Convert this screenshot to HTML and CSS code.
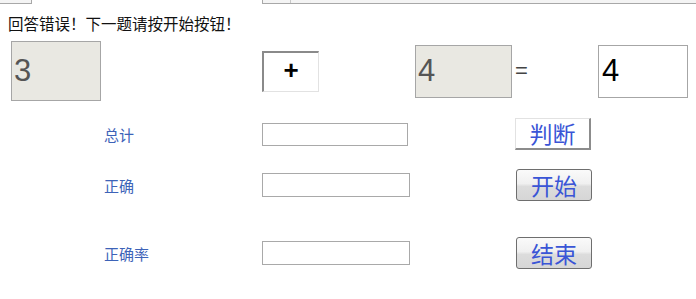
FILE: index.html
```html
<!DOCTYPE html>
<html lang="zh">
<head>
<meta charset="utf-8">
<title>四则运算</title>
<link rel="stylesheet" href="styles.css">
</head>
<body>
<div class="top-strip">
  <div class="stub stub-left"></div>
  <div class="stub stub-right"><div class="stub-cell"></div></div>
</div>
<div class="message">回答错误！下一题请按开始按钮！</div>
<div class="row equation">
  <div class="num readonly n1">3</div>
  <div class="op">+</div>
  <div class="num readonly n2">4</div>
  <div class="eq">=</div>
  <div class="num answer">4</div>
</div>
<div class="row stat r-total">
  <span class="label">总计</span>
  <span class="field f-total"></span>
  <span class="btn btn-flat">判断</span>
</div>
<div class="row stat r-right">
  <span class="label">正确</span>
  <span class="field"></span>
  <span class="btn btn-raised">开始</span>
</div>
<div class="row stat r-rate">
  <span class="label">正确率</span>
  <span class="field"></span>
  <span class="btn btn-raised">结束</span>
</div>
</body>
</html>
```
FILE: styles.css
```css
html, body {
  margin: 0;
  padding: 0;
  background: #ffffff;
}
body {
  width: 696px;
  height: 299px;
  overflow: hidden;
  font-family: "Noto Sans CJK SC", "Liberation Sans", sans-serif;
  color: #000;
}
.top-strip {
  display: flex;
  height: 4px;
}
.stub {
  box-sizing: border-box;
  height: 4px;
  background: #f4f4f4;
  border-bottom: 1px solid #a8a8a8;
}
.stub-left {
  width: 32px;
  border-right: 1px solid #a8a8a8;
}
.stub-right {
  margin-left: 230px;
  flex: 1;
  border-left: 1px solid #a8a8a8;
  display: flex;
}
.stub-cell {
  width: 27px;
  border-right: 1px solid #c8c8c8;
}
.message {
  height: 37px;
  padding-left: 8px;
  font-size: 15.5px;
  line-height: 38px;
  color: #111;
}
.row {
  display: flex;
  align-items: center;
}
.equation {
  height: 60px;
}
.num {
  box-sizing: border-box;
  border: 1px solid #a6a6a6;
  font-family: "Liberation Sans", Arial, sans-serif;
  font-size: 31px;
  padding-left: 2px;
  display: flex;
  align-items: center;
}
.readonly {
  background: #e9e8e2;
  color: #555;
}
.n1 {
  margin-left: 11px;
  width: 90px;
  height: 60px;
}
.op {
  box-sizing: border-box;
  margin-left: 161px;
  width: 57px;
  height: 41px;
  border-top: 2px solid #8a8a8a;
  border-left: 2px solid #8a8a8a;
  border-right: 1px solid #e2e2e2;
  border-bottom: 1px solid #e2e2e2;
  display: flex;
  align-items: center;
  justify-content: center;
  font-family: "Liberation Sans", Arial, sans-serif;
  font-weight: bold;
  font-size: 26px;
  padding-bottom: 3px;
}
.n2 {
  margin-left: 96px;
  width: 97px;
  height: 53px;
}
.eq {
  width: 86px;
  padding-left: 3px;
  box-sizing: border-box;
  font-family: "Liberation Sans", Arial, sans-serif;
  font-size: 22px;
  color: #444;
}
.answer {
  width: 90px;
  height: 53px;
  background: #fff;
  color: #000;
  padding-left: 3px;
}
.stat {
  height: 34px;
}
.r-total { margin-top: 16px; }
.r-right { margin-top: 17px; }
.r-rate { margin-top: 34px; }
.label {
  box-sizing: border-box;
  width: 262px;
  padding-left: 104px;
  font-size: 15px;
  color: #3d63b8;
}
.field {
  box-sizing: border-box;
  display: block;
  width: 148px;
  height: 24px;
  border: 1px solid #a9a9a9;
  background: #fff;
}
.f-total {
  width: 146px;
  height: 23px;
}
.btn {
  box-sizing: border-box;
  display: flex;
  align-items: center;
  justify-content: center;
  width: 76px;
  height: 32px;
  font-size: 23px;
  color: #3a55d6;
  line-height: 1;
}
.btn-flat {
  margin-left: 107px;
  background: #fff;
  border: 1px solid #e2e2e2;
  border-right: 2px solid #8c8c8c;
  border-bottom: 2px solid #8c8c8c;
}
.btn-raised {
  margin-left: 106px;
  border: 1px solid #6e6e6e;
  border-radius: 3px;
  background: linear-gradient(to bottom, #fafafa 0%, #f0f0f0 45%, #dcdcdc 55%, #d6d6d6 100%);
}
```
